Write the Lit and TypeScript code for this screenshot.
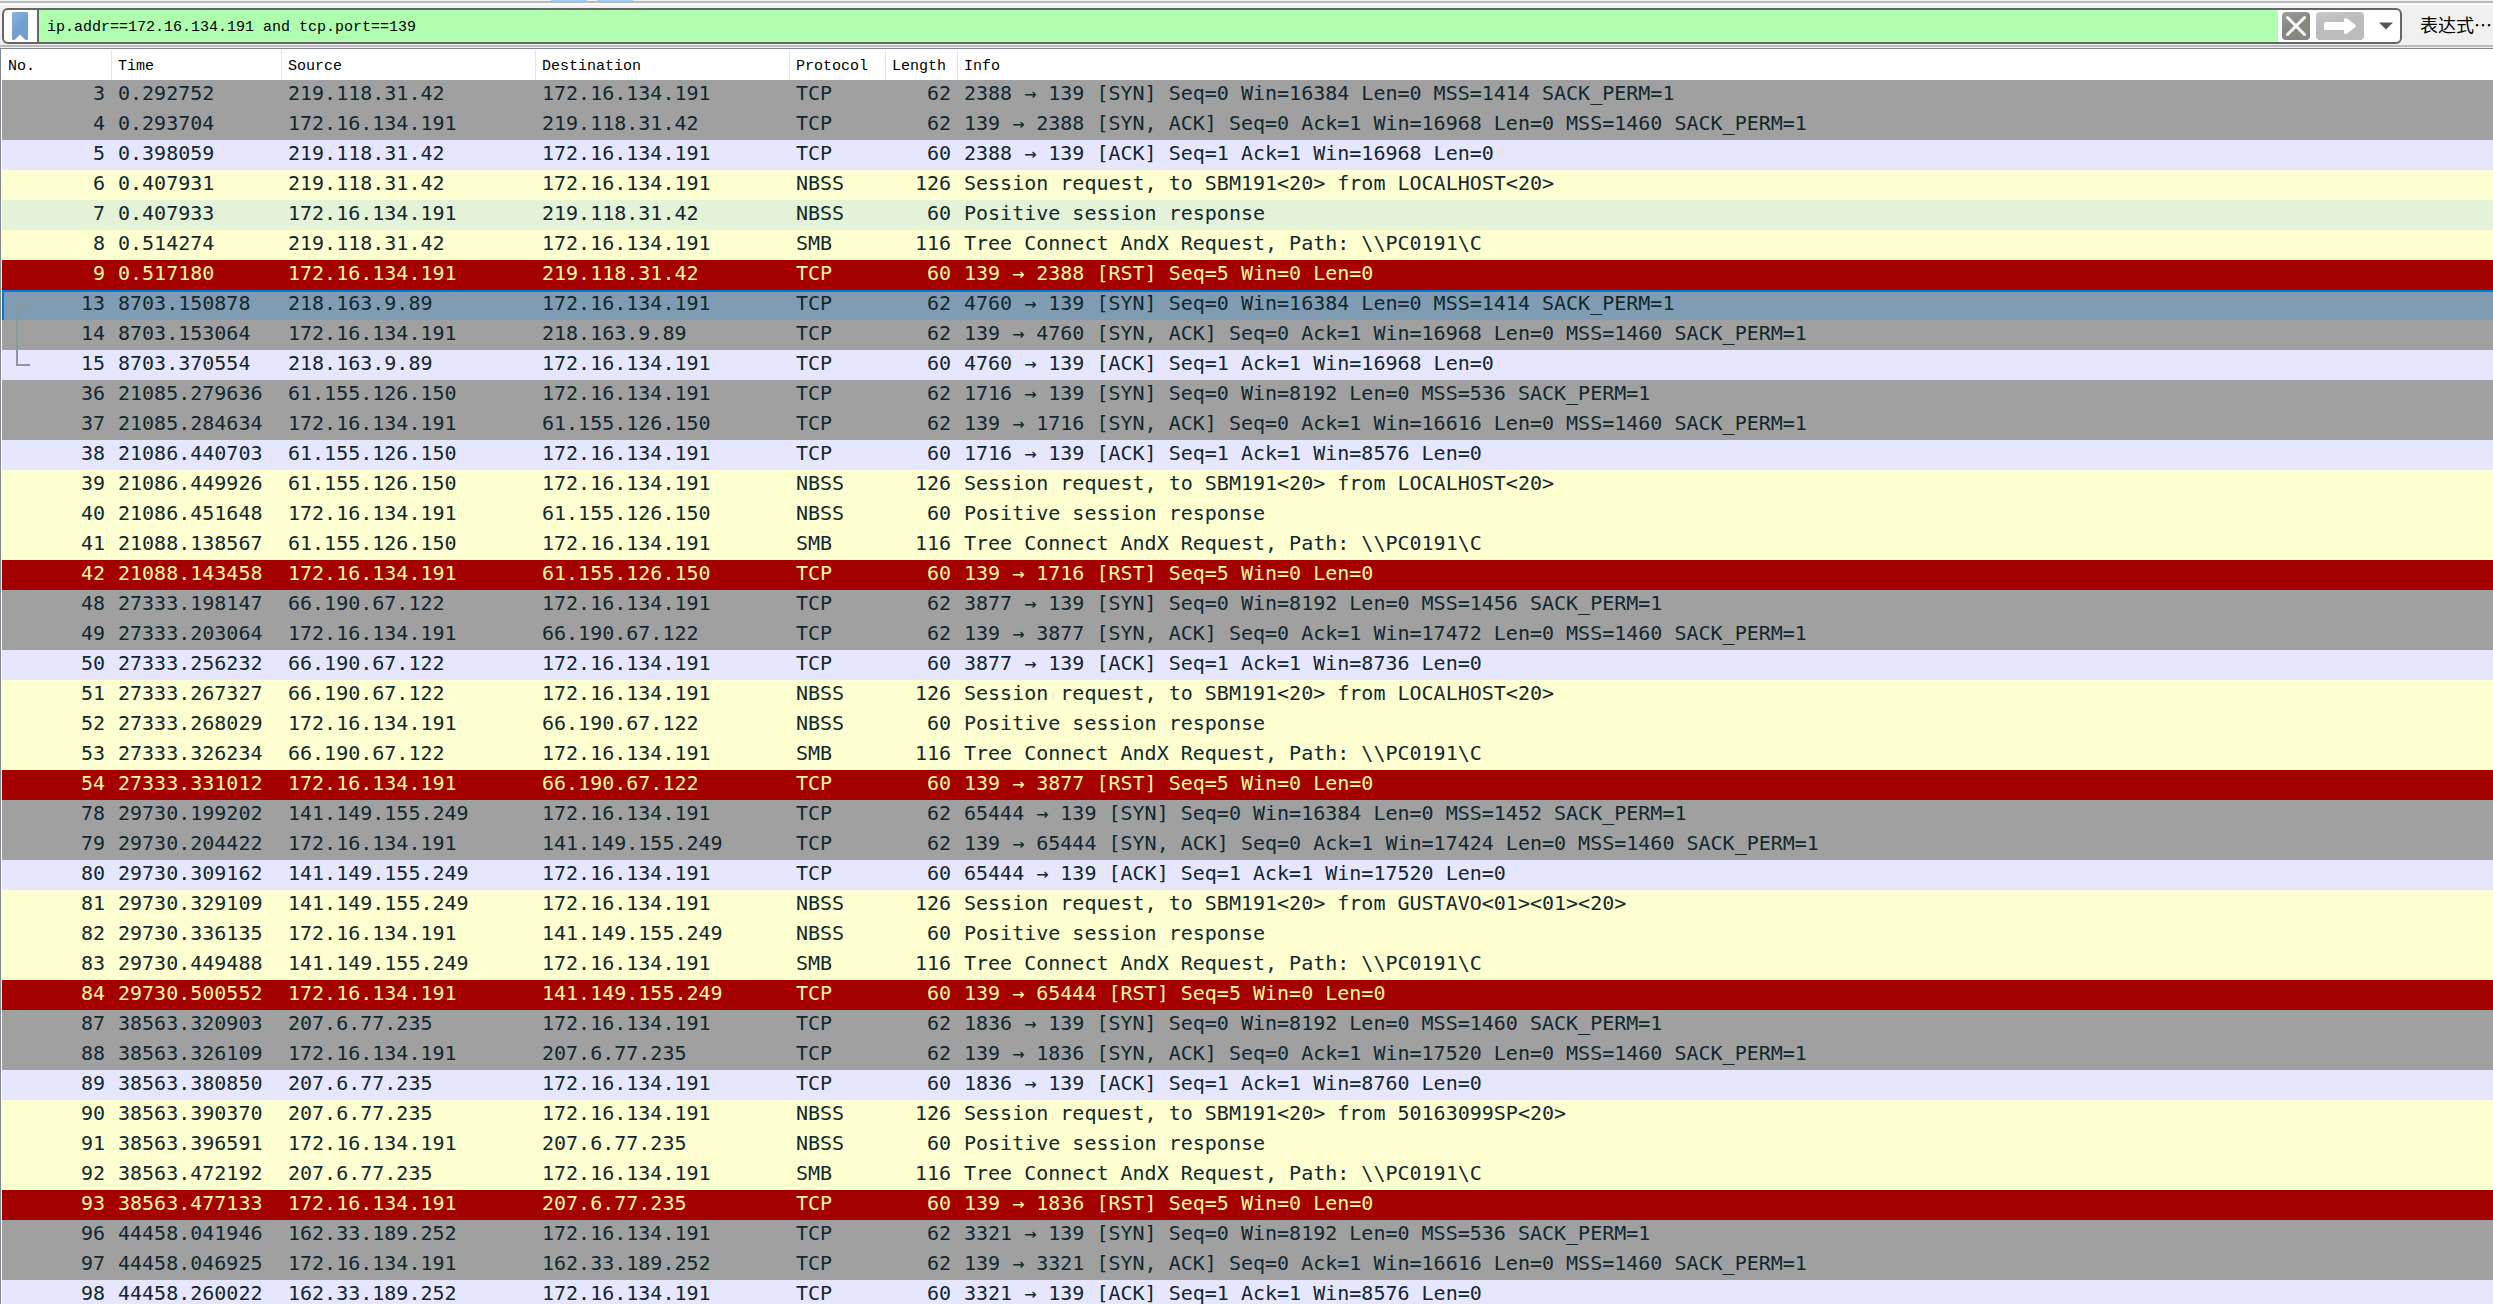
import { LitElement, html, css } from "lit";
import { customElement, state } from "lit/decorators.js";

type Kind = "gray" | "lavender" | "yellow" | "green" | "red" | "selected";

interface Packet {
  no: number;
  time: string;
  src: string;
  dst: string;
  protocol: string;
  length: number;
  info: string;
  kind: Kind;
}

const HOST = "172.16.134.191";

/** One captured conversation with the host, reduced to what differs between them. */
interface Conversation {
  peer: string;
  port: number;
  mss: number;
  clientWindow: number;
  serverWindow: number;
  ackWindow: number;
  name?: string;
  greenResponse?: boolean;
  selectFirst?: boolean;
  frames: [number, string][];
}

const conversations: Conversation[] = [
  {
    peer: "219.118.31.42", port: 2388, mss: 1414, clientWindow: 16384, serverWindow: 16968, ackWindow: 16968,
    name: "LOCALHOST<20>", greenResponse: true,
    frames: [[3, "0.292752"], [4, "0.293704"], [5, "0.398059"], [6, "0.407931"], [7, "0.407933"], [8, "0.514274"], [9, "0.517180"]],
  },
  {
    peer: "218.163.9.89", port: 4760, mss: 1414, clientWindow: 16384, serverWindow: 16968, ackWindow: 16968,
    selectFirst: true,
    frames: [[13, "8703.150878"], [14, "8703.153064"], [15, "8703.370554"]],
  },
  {
    peer: "61.155.126.150", port: 1716, mss: 536, clientWindow: 8192, serverWindow: 16616, ackWindow: 8576,
    name: "LOCALHOST<20>",
    frames: [[36, "21085.279636"], [37, "21085.284634"], [38, "21086.440703"], [39, "21086.449926"], [40, "21086.451648"], [41, "21088.138567"], [42, "21088.143458"]],
  },
  {
    peer: "66.190.67.122", port: 3877, mss: 1456, clientWindow: 8192, serverWindow: 17472, ackWindow: 8736,
    name: "LOCALHOST<20>",
    frames: [[48, "27333.198147"], [49, "27333.203064"], [50, "27333.256232"], [51, "27333.267327"], [52, "27333.268029"], [53, "27333.326234"], [54, "27333.331012"]],
  },
  {
    peer: "141.149.155.249", port: 65444, mss: 1452, clientWindow: 16384, serverWindow: 17424, ackWindow: 17520,
    name: "GUSTAVO<01><01><20>",
    frames: [[78, "29730.199202"], [79, "29730.204422"], [80, "29730.309162"], [81, "29730.329109"], [82, "29730.336135"], [83, "29730.449488"], [84, "29730.500552"]],
  },
  {
    peer: "207.6.77.235", port: 1836, mss: 1460, clientWindow: 8192, serverWindow: 17520, ackWindow: 8760,
    name: "50163099SP<20>",
    frames: [[87, "38563.320903"], [88, "38563.326109"], [89, "38563.380850"], [90, "38563.390370"], [91, "38563.396591"], [92, "38563.472192"], [93, "38563.477133"]],
  },
  {
    peer: "162.33.189.252", port: 3321, mss: 536, clientWindow: 8192, serverWindow: 16616, ackWindow: 8576,
    frames: [[96, "44458.041946"], [97, "44458.046925"], [98, "44458.260022"]],
  },
];

function expand(c: Conversation): Packet[] {
  const steps: [boolean, string, number, string, Kind][] = [
    [true, "TCP", 62, `${c.port} → 139 [SYN] Seq=0 Win=${c.clientWindow} Len=0 MSS=${c.mss} SACK_PERM=1`, c.selectFirst ? "selected" : "gray"],
    [false, "TCP", 62, `139 → ${c.port} [SYN, ACK] Seq=0 Ack=1 Win=${c.serverWindow} Len=0 MSS=1460 SACK_PERM=1`, "gray"],
    [true, "TCP", 60, `${c.port} → 139 [ACK] Seq=1 Ack=1 Win=${c.ackWindow} Len=0`, "lavender"],
    [true, "NBSS", 126, `Session request, to SBM191<20> from ${c.name}`, "yellow"],
    [false, "NBSS", 60, "Positive session response", c.greenResponse ? "green" : "yellow"],
    [true, "SMB", 116, "Tree Connect AndX Request, Path: \\\\PC0191\\C", "yellow"],
    [false, "TCP", 60, `139 → ${c.port} [RST] Seq=5 Win=0 Len=0`, "red"],
  ];
  return c.frames.map(([no, time], i) => {
    const [fromPeer, protocol, length, info, kind] = steps[i];
    return { no, time, src: fromPeer ? c.peer : HOST, dst: fromPeer ? HOST : c.peer, protocol, length, info, kind };
  });
}

@customElement("filter-bar")
export class FilterBar extends LitElement {
  @state() private filter = "ip.addr==172.16.134.191 and tcp.port==139";

  static styles = css`
    :host {
      display: block;
      background: #f0f0f0;
      font-family: "Liberation Mono", "Noto Sans CJK SC", monospace;
    }
    .edge {
      display: flex;
      gap: 10px;
      height: 1px;
      padding-left: 551px;
      border-bottom: 2px solid #bababa;
    }
    .tab {
      width: 36px;
      background: #99d1ff;
    }
    .bar {
      display: flex;
      align-items: center;
      border-top: 2px solid #fafafa;
      border-bottom: 2px solid #bababa;
      padding: 3px 0 1px 2px;
    }
    .field {
      flex: 1;
      display: flex;
      align-items: center;
      box-sizing: border-box;
      height: 36px;
      border: 2px solid #666;
      border-radius: 6px;
      background: #fff;
      overflow: hidden;
    }
    button {
      display: flex;
      padding: 0;
      border: 0;
      background: none;
      font: inherit;
      color: #000;
    }
    .bookmark {
      padding: 0 9px 0 8px;
      border-right: 2px solid #666;
    }
    input {
      flex: 1;
      min-width: 0;
      box-sizing: border-box;
      height: 32px;
      margin: 0 4px 0 0;
      padding: 3px 8px 0;
      border: 0;
      outline: 0;
      background: #afffaf;
      color: #000;
      font: 15px "Liberation Mono", monospace;
    }
    .apply {
      margin: 0 8px 0 6px;
    }
    .history {
      padding: 0 7px;
    }
    .expression {
      padding: 0 1px 4px 18px;
      font: 18px/24px "Noto Sans CJK SC", sans-serif;
    }
  `;

  render() {
    return html`
      <div class="edge"><span class="tab"></span><span class="tab"></span></div>
      <div class="bar">
        <div class="field">
          <button class="bookmark" aria-label="Bookmark">
            <svg width="16" height="32" viewBox="0 0 16 32">
              <defs>
                <linearGradient id="b" x1="0" y1="0" x2="0.6" y2="1">
                  <stop offset="0" stop-color="#8db2dc" />
                  <stop offset="0.6" stop-color="#729fcf" />
                </linearGradient>
              </defs>
              <path d="M1.500 2H14.500Q16 2 16 3.500V28.500Q16 30 14.500 30H13.500L8 24.500L2.500 30H1.500Q0 30 0 28.500V3.500Q0 2 1.500 2Z" fill="url(#b)" />
            </svg>
          </button>
          <input
            type="text"
            aria-label="Display filter"
            spellcheck="false"
            .value=${this.filter}
            @input=${(e: Event) => (this.filter = (e.target as HTMLInputElement).value)}
          />
          <button aria-label="Clear" @click=${() => (this.filter = "")}>
            <svg width="28" height="28" viewBox="0 0 28 28">
              <defs>
                <linearGradient id="x" x1="0" y1="0" x2="0.5" y2="1">
                  <stop offset="0" stop-color="#a0a19c" />
                  <stop offset="0.5" stop-color="#868882" />
                </linearGradient>
              </defs>
              <rect width="28" height="28" rx="4" fill="url(#x)" />
              <path d="M5.500 5.500L22.500 22.500M22.500 5.500L5.500 22.500" stroke="#fff" stroke-width="3" stroke-linecap="round" />
            </svg>
          </button>
          <button class="apply" aria-label="Apply">
            <svg width="48" height="28" viewBox="0 0 48 28">
              <defs>
                <linearGradient id="a" x1="0" y1="0" x2="0.5" y2="1">
                  <stop offset="0" stop-color="#c8c8c8" />
                  <stop offset="0.5" stop-color="#bcbcbc" />
                </linearGradient>
              </defs>
              <rect width="48" height="28" rx="4" fill="url(#a)" />
              <path d="M9.500 10H28V7.500Q28.500 5 31 6.500L39.500 13Q40.500 14 39.500 15L31 21.500Q28.500 23 28 20.500V18H9.500Q8 18 8 16.500V11.500Q8 10 9.500 10Z" fill="#fff" />
            </svg>
          </button>
          <button class="history" aria-label="Recent filters">
            <svg width="14" height="8" viewBox="0 0 14 8"><path d="M0 0.500H14L7 7.500Z" fill="#555753" /></svg>
          </button>
        </div>
        <button class="expression">表达式…</button>
      </div>
    `;
  }
}

@customElement("packet-list")
export class PacketList extends LitElement {
  private packets = conversations.flatMap(expand);

  static styles = css`
    :host {
      display: block;
      border-top: 1px solid #f0f0f0;
      background: #fff;
    }
    .frame {
      border-top: 1px solid #828790;
      border-left: 1px solid #828790;
      padding: 1px 0 0 1px;
    }
    table {
      width: 100%;
      table-layout: fixed;
      border-collapse: separate;
      border-spacing: 0;
      font: 20px/26px "DejaVu Sans Mono", monospace;
      color: #12272e;
      text-align: left;
      white-space: pre;
    }
    .no { width: 110px; }
    .time { width: 170px; }
    .address { width: 254px; }
    .protocol { width: 96px; }
    .length { width: 72px; }
    th, td {
      box-sizing: border-box;
      height: 30px;
      padding: 0 0 4px 6px;
      overflow: hidden;
    }
    th {
      padding: 4px 0 0 6px;
      border-right: 1px solid #e5e5e5;
      font: 15px/26px "Liberation Mono", monospace;
      color: #000;
    }
    th:last-child { border-right: 0; }
    .number {
      padding: 0 7px 4px 0;
      text-align: right;
    }
    .gray { background: #a0a0a0; }
    .lavender { background: #e7e6ff; }
    .yellow { background: #feffd0; }
    .green { background: #e4f2d7; }
    .red { background: #a40000; color: #fffc9c; }
    .selected { background: #809cb3; }
    .selected td { box-shadow: inset 0 2px #0078d7; }
    .selected td:first-child {
      box-shadow: inset 2px 2px #0078d7;
      position: relative;
      overflow: visible;
    }
    /* Bracket that joins the frames of the selected conversation. */
    .bracket {
      position: absolute;
      top: 14px;
      left: 14px;
      width: 14px;
      height: 62px;
      box-sizing: border-box;
      border: 2px solid #8a979c;
      border-right: 0;
    }
  `;

  render() {
    return html`
      <div class="frame">
        <table>
          <colgroup>
            <col class="no" /><col class="time" /><col class="address" /><col class="address" />
            <col class="protocol" /><col class="length" /><col />
          </colgroup>
          <thead>
            <tr>
              ${["No.", "Time", "Source", "Destination", "Protocol", "Length", "Info"].map((t) => html`<th scope="col">${t}</th>`)}
            </tr>
          </thead>
          <tbody>
            ${this.packets.map(
              (p) => html`<tr class=${p.kind}><td class="number">${p.kind === "selected" ? html`<span class="bracket"></span>` : ""}${p.no}</td><td>${p.time}</td><td>${p.src}</td><td>${p.dst}</td><td>${p.protocol}</td><td class="number">${p.length}</td><td>${p.info}</td></tr>`
            )}
          </tbody>
        </table>
      </div>
    `;
  }
}

@customElement("app-root")
export class AppRoot extends LitElement {
  static styles = css`
    :host {
      display: block;
      height: 100vh;
      overflow: hidden;
    }
  `;

  render() {
    return html`<filter-bar></filter-bar><packet-list></packet-list>`;
  }
}
